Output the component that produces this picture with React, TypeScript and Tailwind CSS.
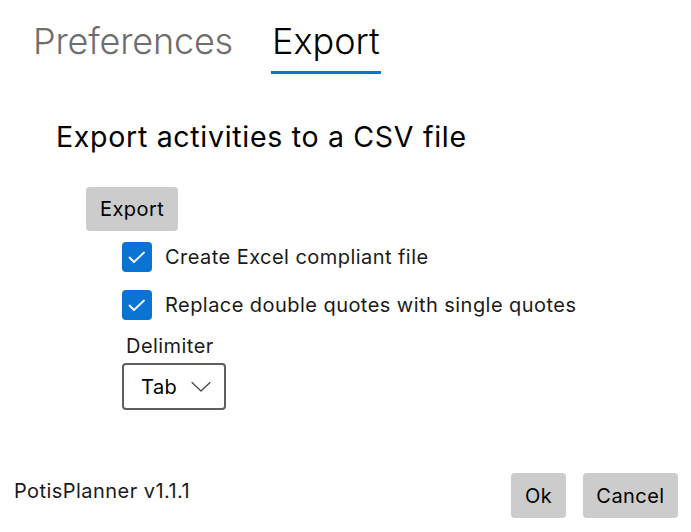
import { useState } from "react";

function Check({ checked, onToggle, label }: { checked: boolean; onToggle: () => void; label: string }) {
  return (
    <label className="flex items-center cursor-pointer select-none" onClick={onToggle}>
      <span
        className={
          checked
            ? "flex h-[30px] w-[30px] items-center justify-center rounded-[4px] bg-[#0a74d4]"
            : "flex h-[30px] w-[30px] items-center justify-center rounded-[4px] border-2 border-[#5f5f5f] bg-white"
        }
      >
        {checked && (
          <svg width="30" height="30" viewBox="0 0 30 30" fill="none">
            <path d="M7.5 15.5 L12 20 L22 10.5" stroke="white" strokeWidth="1.8" strokeLinecap="round" strokeLinejoin="round" />
          </svg>
        )}
      </span>
      <span className="ml-[13px] text-[20px] leading-[24px] tracking-[0.45px] text-[#1a1a1a]">{label}</span>
    </label>
  );
}

export default function App() {
  const [tab, setTab] = useState("export");
  const [excel, setExcel] = useState(true);
  const [quotes, setQuotes] = useState(true);

  return (
    <div className="flex h-[532px] w-[691px] flex-col bg-white font-['Inter',sans-serif] text-black">
      {/* tabs */}
      <div className="flex pl-[33px] pt-[19px]">
        <button className="flex flex-col items-start" onClick={() => setTab("prefs")}>
          <span className={`text-[36px] leading-[44px] font-light tracking-[-0.2px] ${tab === "prefs" ? "text-black" : "text-[#6e6e6e]"}`}>Preferences</span>
          <span className={`mt-[8px] h-[3px] w-full ${tab === "prefs" ? "bg-[#0a74d4]" : "bg-transparent"}`} />
        </button>
        <button className="ml-[38px] flex flex-col items-center" onClick={() => setTab("export")}>
          <span className={`px-[1px] text-[36px] leading-[44px] font-light ${tab === "export" ? "text-black" : "text-[#6e6e6e]"}`}>Export</span>
          <span className={`mt-[8px] h-[3px] w-full ${tab === "export" ? "bg-[#0a74d4]" : "bg-transparent"}`} />
        </button>
      </div>

      {/* export panel */}
      <div className="pl-[56px] pt-[46px]">
        <h1 className="text-[28.5px] leading-[34px] font-normal tracking-[0.7px]">Export activities to a CSV file</h1>
        <div className="ml-[30px] mt-[33px] flex flex-col items-start">
          <button className="h-[44px] rounded-[4px] bg-[#cccccc] px-[14px] text-[20px] leading-[24px] tracking-[0.45px]">Export</button>
          <div className="ml-[36px] mt-[11px] flex flex-col gap-[18px]">
            <Check checked={excel} onToggle={() => setExcel(!excel)} label="Create Excel compliant file" />
            <Check checked={quotes} onToggle={() => setQuotes(!quotes)} label="Replace double quotes with single quotes" />
          </div>
          <div className="ml-[36px] mt-[14px] flex flex-col">
            <span className="ml-[4px] text-[20px] leading-[24px] tracking-[0.45px] text-[#1a1a1a]">Delimiter</span>
            <button className="mt-[5px] flex h-[47px] w-[104px] items-center rounded-[4px] border-2 border-[#5f5f5f] bg-white pl-[17px]">
              <span className="text-[20px] leading-[24px] tracking-[0.45px]">Tab</span>
              <svg className="ml-[14px]" width="20" height="12" viewBox="0 0 20 12" fill="none">
                <path d="M1 1.5 L10 10 L19 1.5" stroke="#444" strokeWidth="1.2" strokeLinecap="round" strokeLinejoin="round" />
              </svg>
            </button>
          </div>
        </div>
      </div>

      {/* footer */}
      <div className="mt-auto flex items-end justify-between pb-[14px] pl-[14px] pr-[13px]">
        <span className="mb-[15px] text-[20px] leading-[24px] tracking-[0.45px] text-[#1a1a1a]">PotisPlanner v1.1.1</span>
        <div className="flex gap-[17px]">
          <button className="h-[45px] w-[55px] rounded-[4px] bg-[#cccccc] text-[20px] leading-[24px] tracking-[0.45px]">Ok</button>
          <button className="h-[45px] w-[95px] rounded-[4px] bg-[#cccccc] text-[20px] leading-[24px] tracking-[0.45px]">Cancel</button>
        </div>
      </div>
    </div>
  );
}
